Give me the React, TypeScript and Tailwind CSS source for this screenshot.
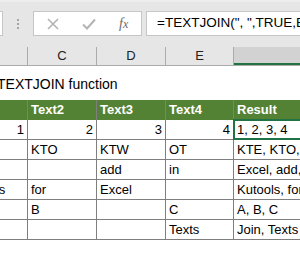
// Excel sheet fragment: formula bar + TEXTJOIN example table

const FONT = { fontFamily: '"Liberation Sans", Arial, sans-serif' }

type Row = { b: string; c: string; d: string; e: string; f: string; num?: boolean; selected?: boolean }

const ROWS: Row[] = [
  { b: '1', c: '2', d: '3', e: '4', f: '1, 2, 3, 4', num: true, selected: true },
  { b: 'KTE', c: 'KTO', d: 'KTW', e: 'OT', f: 'KTE, KTO, KTW, OT' },
  { b: 'Excel', c: '', d: 'add', e: 'in', f: 'Excel, add, in' },
  { b: 'Kutools', c: 'for', d: 'Excel', e: '', f: 'Kutools, for, Excel' },
  { b: 'A', c: 'B', d: '', e: 'C', f: 'A, B, C' },
  { b: 'Join', c: '', d: '', e: 'Texts', f: 'Join, Texts' },
]

const WIDTHS = ['w-[69px]', 'w-[69px]', 'w-[69px]', 'w-[68px]']

function FormulaBar() {
  return (
    <div className="h-[47px] bg-[#e6e6e6] border-t-2 border-[#ededed] flex items-start pt-[9px]">
      {/* name box edge */}
      <div className="h-[25px] w-[3px] bg-white border border-l-0 border-[#c6c6c6]" />
      {/* grip dots */}
      <div className="ml-[14px] mt-[8px] flex flex-col gap-[2px]">
        <span className="h-[2px] w-[2px] bg-[#a6a6a6]" />
        <span className="h-[2px] w-[2px] bg-[#a6a6a6]" />
        <span className="h-[2px] w-[2px] bg-[#a6a6a6]" />
      </div>
      {/* cancel / enter / fx */}
      <div className="ml-[14px] h-[25px] w-[109px] bg-white border border-[#c6c6c6] flex items-center">
        <svg width="12" height="12" viewBox="0 0 12 12" className="ml-[13px]">
          <path d="M1 1 L11 11 M11 1 L1 11" stroke="#b4b4b4" strokeWidth="1.6" />
        </svg>
        <svg width="14" height="12" viewBox="0 0 14 12" className="ml-[23px]">
          <path d="M1 6.5 L5 10.5 L13 1.5" stroke="#b4b4b4" strokeWidth="2" fill="none" />
        </svg>
        <span
          className="ml-[23px] text-[14px] italic text-[#6b6b6b] leading-none"
          style={{ fontFamily: '"Liberation Serif", "Times New Roman", serif' }}
        >
          f<span className="text-[12px]">x</span>
        </span>
      </div>
      {/* formula input */}
      <div className="ml-[4px] h-[25px] flex-1 bg-white border border-r-0 border-[#c6c6c6] flex items-center pl-[10px] overflow-hidden">
        <span className="text-[13.5px] text-black whitespace-nowrap" style={FONT}>
          =TEXTJOIN(", ",TRUE,B4:E4)
        </span>
      </div>
    </div>
  )
}

function ColumnHeaders() {
  const cols = ['B', 'C', 'D', 'E']
  return (
    <div className="h-[19px] bg-[#e6e6e6] border-b border-[#ababab] overflow-hidden">
      <div className="flex h-full ml-[-41px]">
        {cols.map((c, i) => (
          <div
            key={c}
            className={`${WIDTHS[i]} shrink-0 h-full border-r border-[#ababab] flex items-center justify-center text-[13px] text-[#222]`}
            style={FONT}
          >
            {c}
          </div>
        ))}
        <div className="w-[80px] shrink-0 h-full bg-[#d2d2d2] border-b-2 border-[#217346]" />
      </div>
    </div>
  )
}

function Cell({ text, w, right, bold, head }: { text: string; w: string; right?: boolean; bold?: boolean; head?: boolean }) {
  return (
    <div
      className={`${w} shrink-0 h-full border-r border-[#7f7f7f] px-[3px] flex items-center whitespace-nowrap overflow-hidden ${
        right ? 'justify-end' : ''
      } ${bold ? 'font-bold' : ''} ${head ? 'text-white' : 'text-black'}`}
    >
      {text}
    </div>
  )
}

function Sheet() {
  return (
    <div className="overflow-hidden text-[13px]" style={FONT}>
      {/* title row */}
      <div className="h-[34px] pt-[3px] flex items-center ml-[-3px] text-[14px] text-black whitespace-nowrap">
        TEXTJOIN function
      </div>
      <div className="ml-[-41px] w-[400px]">
        {/* header row */}
        <div className="flex h-[20px] bg-[#548235]">
          {['Text1', 'Text2', 'Text3', 'Text4'].map((t, i) => (
            <Cell key={t} text={t} w={WIDTHS[i]} bold head />
          ))}
          <Cell text="Result" w="w-[100px]" bold head />
        </div>
        {ROWS.map((r, idx) => (
          <div key={idx} className="flex h-[20px] border-b border-[#7f7f7f]">
            {[r.b, r.c, r.d, r.e].map((t, i) => (
              <Cell key={i} text={t} w={WIDTHS[i]} right={r.num} />
            ))}
            <div className="relative w-[100px] shrink-0 h-full px-[3px] flex items-center whitespace-nowrap text-black">
              {r.f}
              {r.selected && (
                <div className="absolute left-[-1px] top-[-1px] right-0 bottom-[-1px] border-2 border-[#217346]" />
              )}
            </div>
          </div>
        ))}
      </div>
    </div>
  )
}

export default function App() {
  return (
    <div className="w-[300px] h-[267px] bg-white overflow-hidden">
      <FormulaBar />
      <ColumnHeaders />
      <Sheet />
    </div>
  )
}
